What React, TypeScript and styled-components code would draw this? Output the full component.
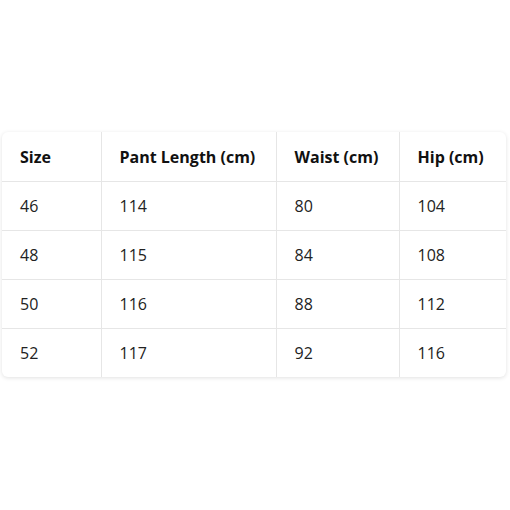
import styled, { createGlobalStyle } from "styled-components";

const GlobalStyle = createGlobalStyle`
  html, body {
    margin: 0;
    padding: 0;
    background: #fff;
  }
  body {
    font-family: "Open Sans", "Noto Sans", sans-serif;
    color: #1a1a1a;
  }
`;

const Page = styled.div`
  width: 510px;
  height: 510px;
  display: flex;
  align-items: center;
  padding: 0 0 1px 2px;
  box-sizing: border-box;
`;

const Card = styled.div`
  width: 504px;
  background: #fff;
  border-radius: 6px;
  overflow: hidden;
  box-shadow: 0 1px 4px rgba(0, 0, 0, 0.12);
`;

const Table = styled.table`
  width: 100%;
  border-collapse: collapse;
  table-layout: fixed;
`;

const HeadCell = styled.th`
  height: 49px;
  padding: 0 0 0 18px;
  text-align: left;
  font-size: 16px;
  font-weight: 700;
  color: #111;
  border-bottom: 1px solid #e6e6e6;
  border-right: 1px solid #e6e6e6;
  &:last-child {
    border-right: none;
  }
`;

const Cell = styled.td`
  height: 48px;
  padding: 0 0 0 18px;
  font-size: 16px;
  color: #222;
  border-bottom: 1px solid #e6e6e6;
  border-right: 1px solid #e6e6e6;
  &:last-child {
    border-right: none;
  }
  tr:last-child > & {
    border-bottom: none;
  }
`;

const columns = [
  { title: "Size", width: 99 },
  { title: "Pant Length (cm)", width: 175 },
  { title: "Waist (cm)", width: 123 },
  { title: "Hip (cm)", width: 107 },
];

const rows = [
  ["46", "114", "80", "104"],
  ["48", "115", "84", "108"],
  ["50", "116", "88", "112"],
  ["52", "117", "92", "116"],
];

export default function App() {
  return (
    <>
      <GlobalStyle />
      <Page>
        <Card>
          <Table>
            <colgroup>
              {columns.map((c) => (
                <col key={c.title} style={{ width: c.width }} />
              ))}
            </colgroup>
            <thead>
              <tr>
                {columns.map((c) => (
                  <HeadCell key={c.title}>{c.title}</HeadCell>
                ))}
              </tr>
            </thead>
            <tbody>
              {rows.map((r) => (
                <tr key={r[0]}>
                  {r.map((v, i) => (
                    <Cell key={i}>{v}</Cell>
                  ))}
                </tr>
              ))}
            </tbody>
          </Table>
        </Card>
      </Page>
    </>
  );
}
